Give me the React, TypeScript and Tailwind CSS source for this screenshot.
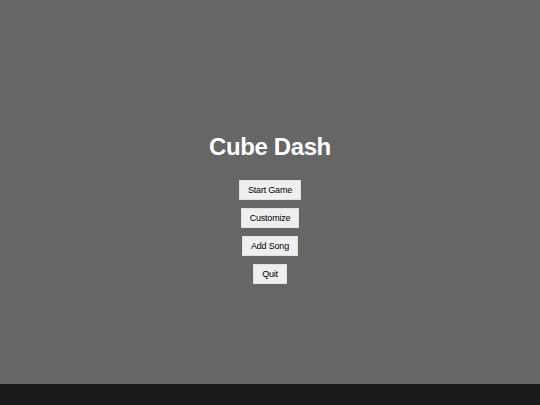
import React from 'react';

const MENU_ITEMS = ['Start Game', 'Customize', 'Add Song', 'Quit'];

const App: React.FC = () => {
  return (
    <div className="w-[540px] h-[405px] flex flex-col bg-[#1a1a1a] font-['Liberation_Sans',Arial,sans-serif]">
      {/* game screen */}
      <div className="h-[384px] bg-[#666666] flex flex-col items-center pt-[133px]">
        <h1 className="text-[24px] leading-[28px] font-bold text-white tracking-[-0.4px] mb-[19px]">Cube Dash</h1>
        <div className="flex flex-col items-center gap-2">
          {MENU_ITEMS.map((label) => (
            <button
              key={label}
              className="h-5 px-2 bg-[#efefef] border border-[#e0e0e0] text-[9px] leading-none tracking-[-0.2px] text-black"
            >
              {label}
            </button>
          ))}
        </div>
      </div>
    </div>
  );
};

export default App;
